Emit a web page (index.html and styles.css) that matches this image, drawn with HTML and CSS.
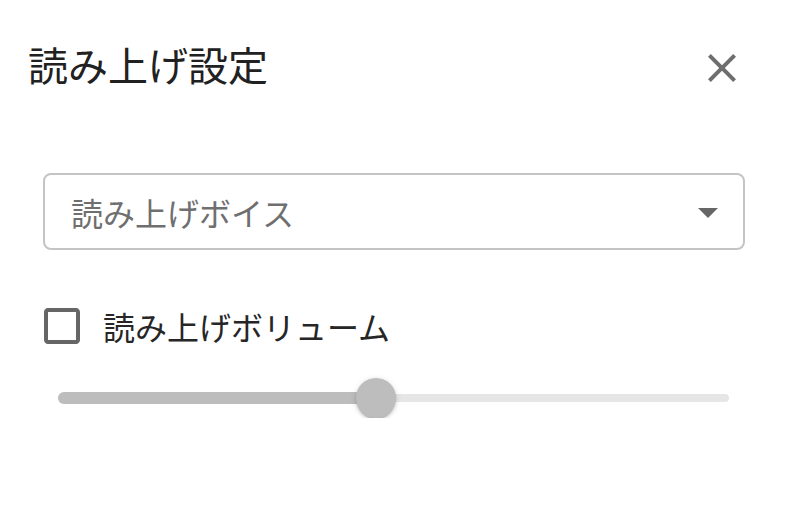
FILE: index.html
```html
<!DOCTYPE html>
<html lang="ja">
<head>
<meta charset="utf-8">
<link rel="stylesheet" href="styles.css">
</head>
<body>
<div class="dialog">
  <div class="title-row">
    <h2 class="title">読み上げ設定</h2>
    <button class="close" aria-label="close">
      <svg viewBox="0 0 24 24" width="48" height="48"><path d="M19 6.41 17.59 5 12 10.59 6.41 5 5 6.41 10.59 12 5 17.59 6.41 19 12 13.41 17.59 19 19 17.59 13.41 12z"/></svg>
    </button>
  </div>
  <div class="content">
    <div class="select">
      <span class="placeholder">読み上げボイス</span>
      <svg class="arrow" viewBox="0 0 24 24" width="48" height="48"><path d="M7 10l5 5 5-5z"/></svg>
    </div>
    <label class="check-row">
      <svg class="checkbox" viewBox="0 0 24 24" width="48" height="48"><path d="M19 5v14H5V5h14m0-2H5c-1.11 0-2 .9-2 2v14c0 1.1.89 2 2 2h14c1.1 0 2-.9 2-2V5c0-1.1-.9-2-2-2z"/></svg>
      <span class="label">読み上げボリューム</span>
    </label>
    <div class="slider">
      <div class="rail">
        <div class="track" style="width: 47.4%"></div>
        <div class="thumb" style="left: 47.4%"></div>
      </div>
    </div>
  </div>
</div>
</body>
</html>
```
FILE: styles.css
```css
* { box-sizing: border-box; }
html, body {
  margin: 0;
  background: #fff;
  font-family: Roboto, "Noto Sans CJK JP", sans-serif;
}
.dialog {
  width: 790px;
  padding-top: 36px;
}
.title-row {
  display: flex;
  align-items: center;
  justify-content: space-between;
  height: 64px;
  padding-left: 28px;
  padding-right: 40px;
}
.title {
  margin: 0;
  font-size: 40px;
  font-weight: 400;
  color: #212121;
  line-height: 64px;
}
.close {
  width: 56px;
  height: 56px;
  border: 0;
  padding: 0;
  background: transparent;
  display: flex;
  align-items: center;
  justify-content: center;
}
.close svg { fill: #6e6e6e; }
.content {
  display: flex;
  flex-direction: column;
}
.select {
  margin-top: 73px;
  margin-left: 43px;
  width: 702px;
  height: 77px;
  border: 2px solid #c4c4c4;
  border-radius: 8px;
  display: flex;
  align-items: center;
  justify-content: space-between;
  padding-left: 26px;
  padding-right: 11px;
}
.placeholder {
  font-size: 32px;
  color: #6f6f6f;
}
.arrow { fill: #666; }
.check-row {
  margin-top: 52px;
  margin-left: 38px;
  height: 48px;
  display: flex;
  align-items: center;
  gap: 17px;
}
.checkbox { fill: #666; }
.label {
  font-size: 32px;
  color: #262626;
}
.slider {
  margin-top: 28px;
  margin-left: 58px;
  width: 671px;
  height: 40px;
  display: flex;
  align-items: center;
}
.rail {
  position: relative;
  width: 100%;
  height: 8px;
  border-radius: 4px;
  background: #e6e6e6;
}
.track {
  position: absolute;
  left: 0;
  top: -2px;
  height: 12px;
  border-radius: 6px;
  background: #bdbdbd;
}
.thumb {
  position: absolute;
  top: 50%;
  width: 40px;
  height: 40px;
  margin-left: -20px;
  margin-top: -20px;
  border-radius: 50%;
  background: #bdbdbd;
  box-shadow: 0 3px 2px -2px rgba(0,0,0,0.2), 0 2px 3px 0 rgba(0,0,0,0.14), 0 1px 6px 0 rgba(0,0,0,0.12);
}
```
